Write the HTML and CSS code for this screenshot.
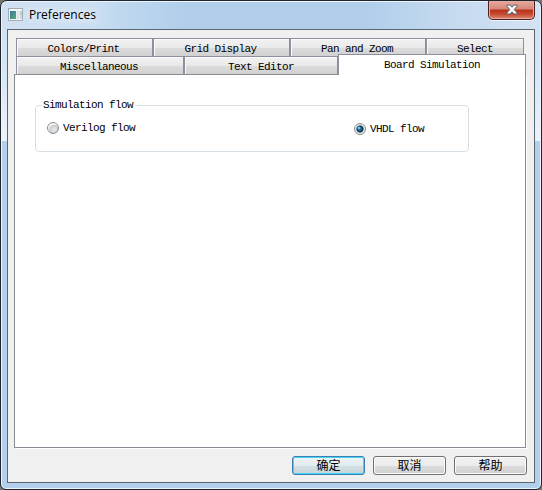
FILE: index.html
```html
<!DOCTYPE html>
<html lang="zh-CN">
<head>
<meta charset="utf-8">
<title>Preferences</title>
<link rel="stylesheet" href="styles.css">
</head>
<body>
<div class="window">
  <header class="titlebar">
    <svg class="app-icon" width="16" height="14" viewBox="0 0 16 14">
      <defs><linearGradient id="pane" x1="0" y1="0" x2="1" y2="1"><stop offset="0" stop-color="#3f76a0"/><stop offset="1" stop-color="#55b07a"/></linearGradient></defs>
      <rect x=".5" y=".5" width="14" height="12" fill="#f4f6f7" stroke="#a2acb5"/>
      <rect x="2" y="3" width="6" height="8" fill="url(#pane)"/>
      <rect x="8.5" y="3" width="3" height="8" fill="#e0e5e9"/>
      <rect x="12" y="3" width="2" height="4" fill="#b9cdca"/>
      <rect x="12" y="7" width="2" height="4" fill="#d4d9dc"/>
    </svg>
    <h1 class="title">Preferences</h1>
    <button class="close" aria-label="Close">
      <svg width="12" height="11" viewBox="0 0 12 11"><path d="M1 1h3.2L6 3.2 7.8 1H11v1.2L8.2 5.5 11 8.8V10H7.8L6 7.8 4.2 10H1V8.8l2.8-3.3L1 2.2z" fill="#fff" stroke="#59606f"/></svg>
    </button>
  </header>
  <main class="client">
    <div class="tabs">
      <div class="row row-top">
        <div class="tab">Colors/Print</div>
        <div class="tab">Grid Display</div>
        <div class="tab">Pan and Zoom</div>
        <div class="tab last">Select</div>
      </div>
      <div class="row row-bottom">
        <div class="tab">Miscellaneous</div>
        <div class="tab last">Text Editor</div>
        <div class="tab active">Board Simulation</div>
      </div>
    </div>
    <section class="panel">
      <div class="group">
        <span class="legend">Simulation flow</span>
        <label class="option"><i class="radio"></i>Verilog flow</label>
        <label class="option vhdl"><i class="radio checked"></i>VHDL flow</label>
      </div>
    </section>
    <footer class="actions">
      <button class="btn default">确定</button>
      <button class="btn">取消</button>
      <button class="btn">帮助</button>
    </footer>
  </main>
</div>
</body>
</html>
```

FILE: styles.css
```css
* { box-sizing: border-box; }

body {
  margin: 0;
  background: #77736f;
  color: #000;
  font: 11px/14px "Liberation Mono", "Noto Sans CJK SC", monospace;
  letter-spacing: -0.6px;
}

.window {
  width: 542px;
  height: 490px;
  padding: 0 6px 6px;
  border: 1px solid #20242c;
  border-radius: 7px 7px 6px 6px;
  box-shadow: inset 0 0 0 1px #e9f6ff;
  background:
    linear-gradient(#d2e2f3, #d7e5f4 40px, #ecf3fa 112px, transparent 112px) 0 28px / 7px 100% no-repeat,
    linear-gradient(#d2e2f3, #d7e5f4 40px, #ecf3fa 112px, transparent 112px) 100% 28px / 7px 100% no-repeat,
    linear-gradient(90deg, #d0e0f1 0, #cbdff3 90px, #bfd8ef 120px, #b1cfeb 180px, #b1cfeb 370px, #c5daef 450px, #d4e3f3 100%) 0 0 / 100% 28px no-repeat,
    #b3cfec;
}

.titlebar {
  display: flex;
  height: 28px;
  padding-left: 1px;
}

.app-icon { margin-top: 7px; }

.title {
  margin: 5px 0 0 5px;
  font: 12px/17px "Open Sans", "Noto Sans", sans-serif;
  letter-spacing: 0;
  text-shadow: 0 0 8px #fff, 0 0 12px #fff;
}

.close {
  display: flex;
  justify-content: center;
  width: 47px;
  height: 19px;
  margin: 0 0 0 auto;
  padding: 3px 0 0;
  border: 1px solid #4e2025;
  border-top: 0;
  border-radius: 0 0 5px 5px;
  box-shadow: inset 0 0 0 1px #e7aaa0, 0 1px 0 #edf5fc;
  background: linear-gradient(#e5a99b 0, #d48878 8px, #b9301d 9px, #c44830 13px, #df8b72 100%);
}

.client {
  height: 454px;
  padding: 8px 6px 0;
  border: 1px solid #596674;
  background: #f0f0f0;
}

.tabs { height: 36px; }

.row {
  display: grid;
  width: 509px;
  margin-left: 2px;
}

.row-top { grid-template-columns: 137px 137px 136px 98px; }
.row-bottom { grid-template-columns: 168px 154px 188px; }

.tab {
  height: 18px;
  padding-top: 3px;
  padding-right: 2px;
  border: 1px solid #8e8f9b;
  border-bottom: 0;
  box-shadow: inset 1px 1px #fbfbfb;
  background: linear-gradient(#f2f2f2, #e9e9e9 50%, #dcdcdc 51%, #d1d1d1);
  text-align: center;
  white-space: nowrap;
}

.tab.last { padding-right: 0; }

.tab.active {
  position: relative;
  height: 21px;
  margin-top: -2px;
  padding-top: 3px;
  padding-right: 0;
  background: #fff;
  box-shadow: none;
}

.panel {
  width: 512px;
  height: 374px;
  padding: 30px 20px 0;
  border: 1px solid #898c95;
  box-shadow: 1px 1px #fff;
  background: #fff;
}

.group {
  position: relative;
  display: grid;
  grid-template-columns: 307px 1fr;
  width: 434px;
  height: 47px;
  padding: 15px 0 0 11px;
  border: 1px solid #d5dfe5;
  border-radius: 4px;
}

.legend {
  position: absolute;
  left: 6px;
  top: -8px;
  padding: 0 2px 0 1px;
  background: #fff;
}

.option {
  display: flex;
  align-items: center;
  gap: 4px;
  height: 14px;
}

.vhdl { margin-top: 1px; }

.radio {
  width: 12px;
  height: 12px;
  border: 1px solid #8c8f91;
  border-radius: 50%;
  background: radial-gradient(circle at 60% 65%, #eceeef 0, #cdd1d5 3.5px, #bfc4c8 4px, #f4f4f4 5px);
}

.radio.checked {
  background: radial-gradient(circle at 4px 4px, #b3e6f7 0, #3aa5d2 1.2px, transparent 2px), radial-gradient(circle, #237bac 0, #13405f 2.6px, #1b4260 3.2px, #e8eaeb 4px);
}

.actions {
  display: flex;
  justify-content: flex-end;
  gap: 8px;
  width: 513px;
  margin-top: 8px;
}

.btn {
  width: 73px;
  height: 19px;
  padding: 0 0 2px;
  border: 1px solid #707070;
  border-radius: 3px;
  box-shadow: inset 0 0 0 1px #fafafa;
  background: linear-gradient(#f2f2f2, #ebebeb 50%, #dddddd 51%, #cfcfcf);
  color: #000;
  font: 12px/15px "Noto Sans CJK SC", sans-serif;
}

.btn.default {
  border-color: #3c7fb1;
  box-shadow: inset 0 0 0 1px #46d3f8;
  background: linear-gradient(#eef3f5, #e3ecef 50%, #d4e0e4 51%, #c6d5da);
}
```
